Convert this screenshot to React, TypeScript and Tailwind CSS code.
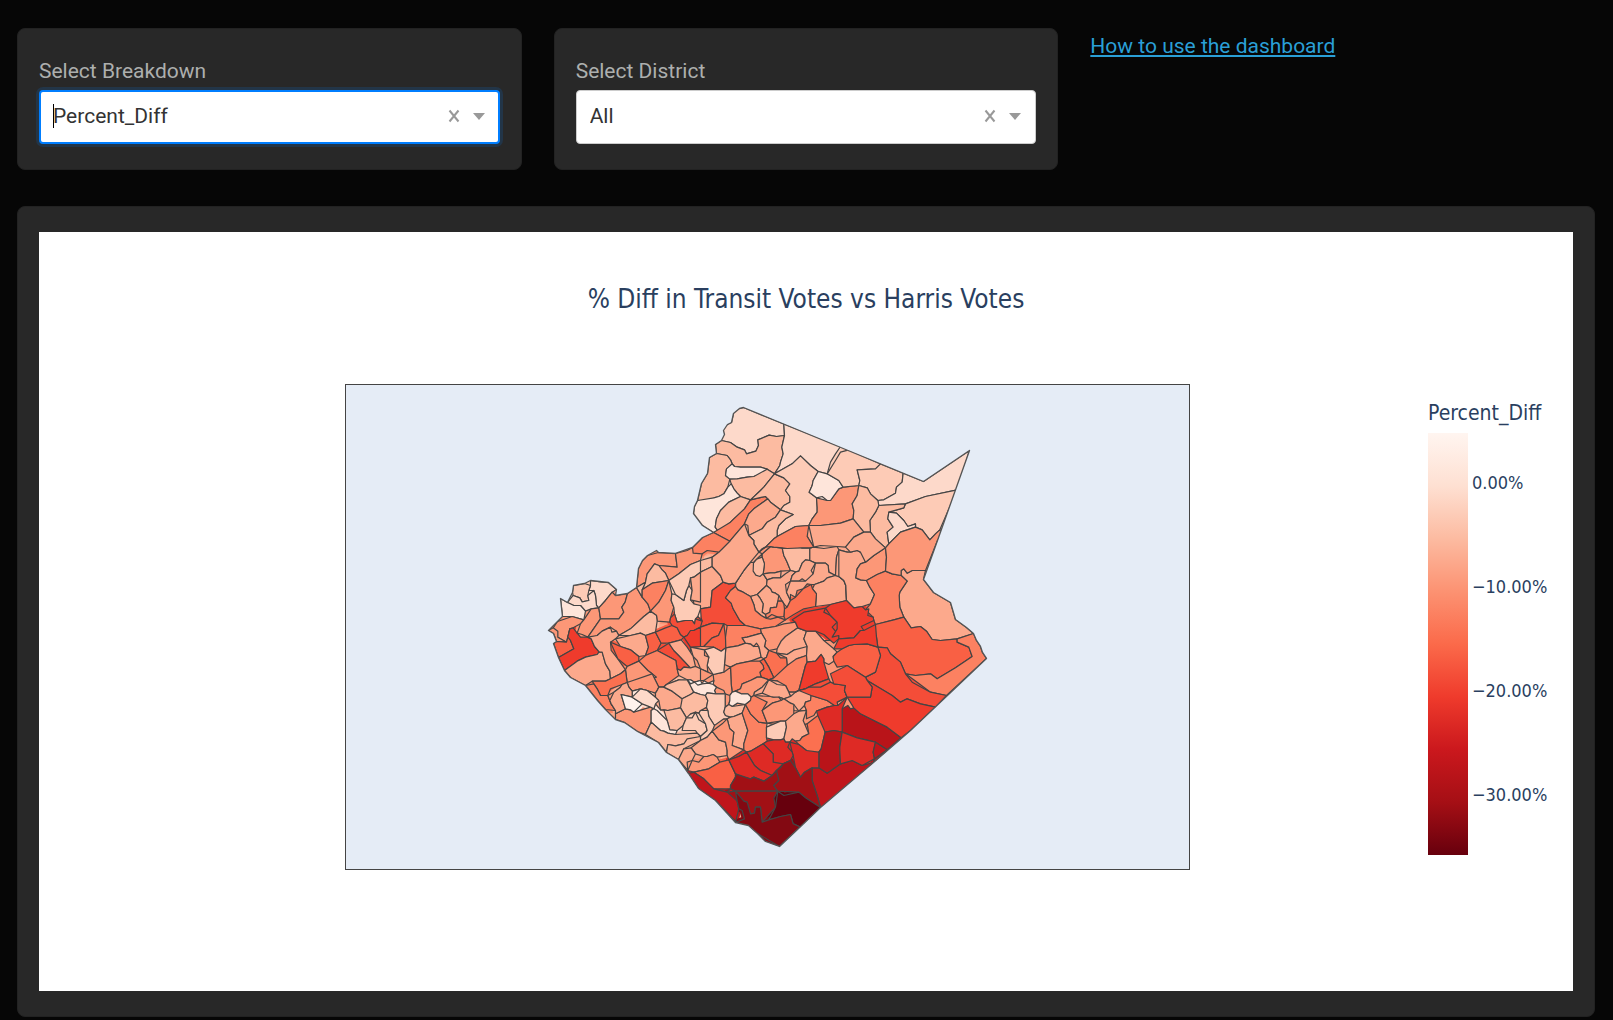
import React from 'react';

type Precinct = [fill: string, points: string];
type Point = [number, number];

interface Region {
  name: string;
  x: number;
  y: number;
  precincts: Precinct[];
}

// Sequential "Reds" scale, light to dark
const REDS: Record<string, string> = {
  a: '#fff2ec',
  b: '#fee5da',
  c: '#fdd9ca',
  d: '#fdcbb6',
  e: '#fcbba1',
  f: '#fca98c',
  g: '#fc9777',
  h: '#fc8161',
  i: '#fb7050',
  j: '#f96044',
  k: '#f44d38',
  l: '#ef3b2c',
  m: '#de2a25',
  n: '#c0151b',
  o: '#b91419',
  p: '#a11015',
  q: '#830912',
  r: '#67000d',
};

const COUNTY =
  '743,407 739,408 733,413 731,422 727,424 723,430 724,434 721,440 715,444 716,453 709,457 707,473 701,483 697,500 694,506 693,513 702,525 713,532 702,537 692,547 675,553 658,552 656,550 647,555 642,560 638,568 636,587 627,593 615,595 616,589 608,582 590,580 584,583 573,585 572,592 567,602 560,598 562,616 557,621 548,630 553,633 556,641 553,643 558,657 564,670 570,677 585,685 597,700 605,709 615,719 624,722 637,731 658,742 666,752 678,759 688,773 698,788 715,800 735,822 748,825 757,833 765,841 779,846 797,829 820,807 840,790 873,762 910,730 986,658 982,652 980,646 976,640 973,633 966,627 955,619 950,602 933,592 923,579 937,540 969,450 923,481';

// Each region's points are in thirds of a map unit, from the region's own corner
const REGIONS: Region[] = [
  {
    name: 'central',
    x: 690,
    y: 540,
    precincts: [
      ['g', '0,320 250,250 420,300 500,300 510,520 300,560 0,520'],
      ['f', '215,40 222,70 218,100 228,135 200,162 180,168 158,155 135,138 150,105 180,65'],
      ['g', '215,35 250,20 275,22 285,55 300,90 272,92 268,88 225,98'],
      ['e', '215,50 198,56 189,66 188,92 196,104 208,108 220,100 217,75'],
      ['e', '275,22 290,24 310,15 335,22 358,22 358,60 345,58 335,68 325,92 316,94 305,85 290,65 280,45'],
      ['f', '358,25 400,24 440,18 445,28 438,50 435,105 415,95 413,75 405,68 375,68 358,55'],
      ['g', '250,-5 345,0 350,-12 370,20 310,15 290,22 250,20 215,38 190,60 225,20'],
      ['f', '222,104 240,97 252,97 254,90 270,90 270,112 248,112 230,118'],
      ['f', '230,118 275,112 285,100 300,92 318,92 300,122 285,132 288,155 300,180 290,200 280,190 265,165 245,155 240,145 228,135'],
      ['f', '335,62 358,58 368,68 362,90 368,100 360,118 345,122 335,115 325,122 300,125 305,105 320,95'],
      ['f', '370,70 400,68 412,76 415,90 432,108 410,112 400,122 372,132 362,132 350,130 338,145 320,150 315,170 300,162 298,185 285,150 300,125 350,120 370,95'],
      ['f', '372,132 400,122 415,110 432,108 445,108 460,120 466,135 468,180 420,192 375,198 378,160 366,145'],
      ['i', '362,132 366,145 378,160 375,198 340,205 310,222 285,238 282,205 298,185 318,175 322,165'],
      ['f', '228,135 238,150 255,158 265,170 262,182 275,185 262,190 258,200 240,202 238,215 225,222 215,215 218,190 208,172 200,165'],
      ['f', '176,172 200,162 208,172 218,190 215,215 228,234 212,225 194,210 190,192'],
      ['h', '275,182 284,205 280,228 262,230 244,222 228,232 222,225 238,218 240,204 258,200 262,188'],
      ['f', '445,28 470,35 510,35 510,190 490,202 468,185 465,130 445,108 432,105 438,50'],
      ['f', '498,72 510,70 510,118 496,112'],
      ['f', '65,50 85,35 130,0 190,0 215,38 160,90 135,128 98,125 65,78'],
      ['e', '0,72 30,60 65,50 70,78 40,90 10,110 0,112'],
      ['f', '0,112 40,88 70,78 90,105 96,125 65,150 60,200 30,205 10,190 5,150'],
      ['k', '98,125 115,130 130,130 120,150 105,172 122,188 128,205 148,240 165,255 100,250 65,248 10,270 5,240 22,228 35,242 32,232 30,205 62,200 62,150'],
      ['h', '135,130 142,148 180,168 192,205 212,228 240,236 285,240 255,258 210,265 165,255 148,240 128,205 122,188 105,172 125,150'],
      ['j', '0,270 65,250 108,252 84,285 65,292 40,318 0,315'],
      ['j', '108,252 105,290 106,322 92,332 70,320 42,318 68,292 86,285'],
      ['h', '110,255 165,258 215,265 213,278 170,290 155,292 165,308 142,316 108,325'],
      ['g', '210,265 255,258 280,250 315,245 322,262 285,288 272,302 260,325 235,330 222,318 226,300 215,278'],
      ['f', '108,325 142,316 180,310 205,318 212,350 180,362 140,370 120,380 102,372'],
      ['f', '155,290 170,290 215,276 226,300 220,320 232,330 228,350 215,352 208,330 210,312 198,308 190,318 165,310'],
      ['f', '322,265 348,272 340,295 350,318 338,330 312,328 290,342 258,338 270,305 285,288'],
      ['f', '265,342 290,342 312,328 352,322 348,345 318,355 312,368 290,375 288,352'],
      ['i', '240,332 262,340 270,352 286,352 290,378 295,395 250,412 235,380 220,355 232,345'],
      ['j', '208,362 222,355 235,380 252,412 235,418 212,410 208,395 220,385'],
      ['h', '350,340 345,375 325,450 295,455 285,435 240,420 255,410 290,378 318,358'],
      ['f', '348,278 375,272 400,300 440,335 428,348 430,362 415,372 400,355 392,342 375,362 350,365 358,320 340,300'],
      ['l', '390,343 400,365 415,415 375,430 322,454 345,365 370,362'],
      ['h', '120,382 180,368 210,358 218,375 206,390 212,410 180,420 155,430 150,445 125,455 122,430'],
      ['g', '120,378 122,430 118,465 104,460 100,450 78,440 70,420 68,402 100,395'],
      ['d', '42,328 70,320 92,330 108,326 100,372 105,395 62,402 50,375 55,350'],
      ['f', '5,320 40,328 42,345 55,352 50,375 52,395 30,385 20,360 8,348'],
      ['g', '0,382 25,378 50,395 65,408 40,420 0,418'],
      ['b', '0,420 12,425 22,434 35,430 42,422 54,428 65,418 68,432 80,440 72,450 76,460 50,457 30,462 20,445 5,446'],
      ['e', '0,462 45,465 52,480 48,500 30,510 0,510'],
      ['d', '52,478 78,462 100,460 104,500 75,510 52,510'],
      ['b', '110,500 118,480 138,465 135,452 152,460 172,460 182,470 165,492 140,488 125,498'],
      ['g', '138,450 155,430 200,410 232,418 215,440 192,455 188,470 155,456'],
      ['f', '190,465 195,452 235,424 262,422 288,435 295,450 290,462 240,468'],
      ['f', '272,480 300,468 295,452 325,455 345,445 362,465 345,485 348,510 310,510 300,488'],
      ['f', '215,510 245,488 280,475 300,490 312,510'],
      ['l', '305,238 340,215 405,203 400,215 440,245 425,260 445,285 430,308 400,282 375,270 345,272 320,262'],
      ['k', '355,440 375,430 418,415 430,430 465,435 462,450 470,470 440,485 362,470'],
    ],
  },
  {
    name: 'west',
    x: 530,
    y: 540,
    precincts: [
      ['c', '180,122 210,124 235,125 258,148 225,180 205,202 198,195 195,165 190,150 175,150 180,135'],
      ['d', '130,135 165,125 175,130 180,150 172,165 175,180 155,184 148,172 128,165'],
      ['c', '120,165 128,165 150,172 155,184 175,180 172,160 185,148 195,165 198,205 165,212 150,195 130,195 110,185'],
      ['b', '90,175 110,185 130,195 148,195 168,212 160,238 125,228 95,228'],
      ['g', '68,262 80,245 130,230 155,235 150,250 128,262 118,265 112,290 108,305 82,290'],
      ['g', '55,270 72,258 82,272 88,290 108,305 78,305'],
      ['j', '68,308 108,305 115,272 120,300 130,325 85,352'],
      ['l', '120,265 128,262 140,278 150,290 182,295 192,318 206,334 200,342 165,350 102,390 88,352 130,325 118,290'],
      ['f', '102,390 140,362 165,350 215,335 225,370 238,392 240,415 185,422 165,435 120,410'],
      ['g', '182,205 208,202 210,235 172,290 155,282 140,278 150,255 162,238'],
      ['g', '245,155 258,160 262,168 285,165 284,185 274,200 280,215 265,235 212,238 205,230 212,205'],
      ['g', '315,148 335,170 360,212 340,228 300,265 265,285 240,260 200,285 175,290 212,235 265,235 280,215 274,200 284,180 287,165'],
      ['f', '175,290 215,272 240,260 244,275 258,272 262,285 240,305 242,330 262,355 285,388 240,415 234,392 222,370 218,330 205,334 190,312'],
      ['g', '318,140 325,85 350,45 385,35 435,38 440,80 385,75 372,70 350,100 345,125'],
      ['g', '430,38 470,30 510,20 510,60 480,80 445,100 415,120 405,98 385,78 440,80'],
      ['e', '345,125 350,100 374,70 395,88 410,116 365,128 335,148'],
      ['e', '315,146 345,128 338,142 330,150 342,165 332,168'],
      ['h', '335,150 365,128 415,120 405,150 385,185 362,208 352,190 342,170'],
      ['g', '415,125 424,160 422,180 430,200 420,232 418,245 380,242 378,225 362,212 385,185'],
      ['d', '420,160 435,162 460,180 468,150 475,135 485,155 480,178 510,195 508,225 495,235 492,250 465,240 440,245 432,220 428,200'],
      ['d', '415,122 445,100 480,80 510,62 510,95 475,110 480,140 470,135 460,178 440,160'],
      ['f', '510,95 475,108 482,150 484,180 510,185'],
      ['e', '262,290 300,265 360,220 378,228 378,245 384,250 375,275 345,285 330,278 300,285'],
      ['f', '255,295 330,278 345,285 354,320 345,345 325,348 300,328 270,318'],
      ['j', '240,303 272,318 300,328 328,350 325,362 290,378 262,352'],
      ['j', '345,285 378,275 392,308 380,330 345,345 354,320'],
      ['j', '378,268 405,262 425,255 440,262 460,290 415,308 390,305'],
      ['k', '415,228 435,226 440,245 465,240 492,250 495,235 510,240 510,260 470,285 450,282 425,255'],
      ['k', '383,335 415,312 430,330 445,345 475,380 460,380 450,390 440,385 436,360'],
      ['f', '415,312 452,298 470,320 485,350 495,378 475,380 445,345'],
      ['l', '462,292 510,262 510,318 482,320'],
      ['h', '330,362 383,335 436,360 440,385 445,405 408,432 385,440 365,400'],
      ['g', '290,392 330,362 352,390 378,410 290,426'],
      ['i', '190,425 225,422 270,400 292,390 290,426 240,445 232,465 210,465 200,445'],
      ['h', '165,435 190,430 200,445 210,465 240,468 242,490 255,510 225,510'],
      ['g', '290,426 368,408 385,440 375,458 350,450 330,445 305,452'],
      ['b', '300,452 322,442 345,450 385,480 370,505 340,480 305,470'],
      ['g', '240,462 275,432 295,440 305,462 272,462 285,505 255,510 242,490'],
      ['a', '272,460 305,465 335,490 300,508 285,505'],
      ['e', '400,440 445,418 480,430 490,455 455,475 430,465 425,452'],
      ['f', '440,390 475,382 510,380 510,420 470,418 445,410'],
      ['a', '470,420 510,418 510,460 492,455'],
      ['f', '385,442 425,452 430,465 460,475 450,502 400,508 375,490'],
    ],
  },
  {
    name: 'southwest',
    x: 580,
    y: 680,
    precincts: [
      ['g', '105,100 130,92 160,95 210,80 216,90 212,125 195,162 170,145 105,118'],
      ['f', '88,60 100,35 118,22 145,12 160,35 150,48 120,45 130,92 105,100'],
      ['a', '120,45 150,48 188,72 155,95 135,92'],
      ['c', '155,45 175,22 200,35 235,65 220,85 185,68'],
      ['f', '230,30 250,20 280,35 305,55 310,70 298,80 262,90 240,88 225,50'],
      ['e', '260,15 290,0 320,0 340,35 335,45 305,52 280,35 245,22'],
      ['b', '322,0 335,8 348,2 362,10 380,0 396,8 412,12 402,24 406,38 375,36 358,42 345,42 338,28'],
      ['e', '305,62 345,42 380,45 384,65 370,85 330,100 318,112 300,85'],
      ['e', '252,95 300,82 312,112 308,135 290,150 268,148 260,120'],
      ['b', '212,90 230,90 262,128 270,150 290,148 285,162 262,158 240,150 220,125'],
      ['d', '320,112 335,112 345,95 355,118 375,130 380,150 360,168 345,150 305,150'],
      ['d', '380,42 435,48 438,80 430,95 450,110 430,115 402,135 385,108'],
      ['d', '355,98 380,90 385,108 402,140 395,152 360,180 358,168 385,150 375,125'],
      ['e', '195,165 218,125 250,152 270,160 350,158 354,172 310,190 262,192 255,210 235,185'],
      ['e', '255,210 260,192 285,196 310,190 320,175 352,170 352,182 310,205 295,238'],
      ['f', '332,202 380,170 400,155 415,178 435,185 440,225 410,230 398,222 380,228 345,220'],
      ['f', '295,238 310,210 330,200 350,224 335,240 320,245 322,270'],
      ['g', '318,265 335,240 355,245 370,228 395,222 418,245 385,265 340,275'],
      ['b', '445,72 452,50 470,35 485,45 510,45 510,60 492,78'],
      ['e', '435,82 495,80 485,98 460,108 435,105'],
      ['f', '440,115 485,105 502,150 490,208 455,195 460,155 448,145'],
      ['g', '400,150 425,130 440,115 448,145 460,155 450,190 495,215 445,238 435,225 440,210 435,185 415,178'],
      ['j', '345,278 385,268 445,240 465,290 450,325 400,325 370,295'],
      ['n', '325,280 345,278 370,295 405,328 465,332 475,385 470,425 480,438 405,360 355,325'],
      ['m', '445,240 475,228 510,212 510,295 480,290 465,280'],
    ],
  },
  {
    name: 'south',
    x: 730,
    y: 680,
    precincts: [
      ['h', '38,100 48,78 60,100 85,125 110,128 108,172 110,182 98,190 48,215 40,190 52,150'],
      ['f', '70,50 95,38 115,5 140,12 170,8 178,28 172,48 130,50 95,45'],
      ['f', '145,50 178,45 195,35 222,25 242,42 240,60 222,70 205,92 190,72'],
      ['h', '48,78 70,52 110,65 95,85 110,128 85,125 60,100'],
      ['g', '95,88 160,58 185,75 180,120 150,122 110,128'],
      ['d', '108,140 145,122 165,122 168,140 160,175 130,178 110,172'],
      ['f', '172,122 190,100 222,92 218,120 235,160 215,170 208,180 185,175 165,185'],
      ['i', '195,182 215,170 235,160 230,130 262,105 275,110 284,155 265,215 250,222 228,210'],
      ['h', '242,48 290,60 312,75 258,92 250,105 228,115 222,75'],
      ['k', '200,35 240,15 270,20 300,5 350,20 345,50 315,75 245,50'],
      ['k', '350,15 410,0 425,20 420,50 350,55'],
      ['o', '335,85 352,75 360,85 370,82 385,100 470,140 512,172 470,208 435,185 335,155'],
      ['m', '260,92 290,80 322,75 350,55 338,85 335,152 310,150 285,155'],
      ['n', '245,262 290,278 330,250 365,240 395,255 430,242 470,205 450,260 270,390 260,345 245,300'],
      ['o', '285,155 335,150 328,200 330,250 290,278 265,262 272,205'],
      ['m', '335,155 380,172 438,190 428,215 432,235 395,254 365,240 330,250 328,210'],
      ['n', '438,190 470,208 432,242 428,215'],
      ['m', '178,185 205,192 230,215 264,222 264,262 240,262 222,275 210,290 195,262 188,225'],
      ['m', '98,190 150,178 180,182 172,200 185,215 180,240 158,250 132,255 128,220'],
      ['m', '48,218 98,190 128,215 128,245 158,250 138,270 125,285 90,270'],
      ['m', '-5,242 48,215 72,255 92,270 125,282 100,302 15,275'],
      ['p', '18,275 70,290 100,302 125,282 140,265 182,245 150,262 145,300 130,315 142,332 15,332 0,315 20,295'],
      ['p', '182,242 188,265 210,290 222,270 250,265 242,295 262,345 268,380 225,352 205,335 140,335 132,310 148,298 145,272'],
      ['p', '-10,335 140,335 130,352 135,380 95,425 90,380 75,380 72,398 60,400 50,365 20,362'],
      ['r', '140,338 160,345 205,335 225,355 270,380 210,440 188,430 180,402 150,408 115,418 135,380'],
      ['q', '15,335 40,362 52,365 60,400 72,398 78,375 90,380 95,425 180,402 188,430 210,440 148,498 80,460 20,430 42,415 35,390 20,362'],
    ],
  },
  {
    name: 'east',
    x: 840,
    y: 540,
    precincts: [
      ['f', '0,30 50,30 75,45 75,65 50,85 45,118 78,120 88,140 102,162 90,190 65,198 40,205 15,185 15,140 0,108'],
      ['g', '75,62 100,45 135,22 135,92 110,102 85,122 45,118 50,80'],
      ['f', '182,90 190,85 200,98 215,90 255,90 248,118 280,155 330,185 345,235 400,282 350,295 300,300 275,297 258,272 240,258 212,262 190,230 178,200 178,155 200,122 182,105'],
      ['h', '80,122 135,92 155,100 182,98 198,125 185,150 176,165 182,210 192,235 160,238 105,252 98,230 75,208 102,162'],
      ['j', '98,254 160,238 192,235 212,262 240,258 262,275 280,300 350,293 350,305 385,320 395,348 345,382 290,415 270,400 225,405 195,400 180,365 150,340 140,322 112,320 100,280'],
      ['h', '350,293 400,282 438,355 318,465 270,455 230,425 200,402 270,402 290,415 345,382 395,350 385,318 350,308'],
      ['k', '112,320 140,322 150,340 180,365 200,402 215,425 270,455 318,465 285,500 240,490 200,475 180,485 155,465 130,450 75,410 105,395 120,345'],
      ['l', '75,410 130,450 180,485 200,475 240,490 288,498 180,595 40,510 22,475 95,468 95,435'],
      ['j', '-25,365 -15,340 25,315 80,310 112,320 120,345 110,395 75,410 20,375 -10,380'],
      ['l', '-45,208 20,186 40,208 85,205 82,225 100,240 62,258 70,270 40,292 -25,290 -10,265 -5,240 -30,225'],
      ['l', '-20,325 -5,295 45,292 60,270 98,255 108,290 112,325 85,312 40,312 5,325'],
      ['k', '-30,400 20,375 75,410 95,435 95,468 20,475 15,430 -5,432 -20,425'],
    ],
  },
  {
    name: 'north',
    x: 670,
    y: 390,
    precincts: [
      ['c', '220,50 340,100 342,135 318,138 296,134 262,148 264,165 256,182 228,190 222,178 200,170 180,156 152,158 130,162 140,120 182,95 185,60'],
      ['e', '135,162 152,158 180,156 200,170 222,178 228,190 256,182 264,165 262,148 296,134 342,135 334,170 338,190 328,225 312,250 290,236 270,230 192,228 180,208 170,195 137,188'],
      ['e', '137,188 170,195 185,220 168,235 165,255 178,266 172,290 160,310 145,318 130,322 115,332 78,333 85,280 105,250 110,200'],
      ['b', '185,225 210,230 270,230 290,238 290,245 250,258 230,260 200,265 175,265 165,250 170,232'],
      ['e', '178,266 230,260 295,240 308,255 270,300 240,328 210,318 190,295'],
      ['b', '82,333 130,322 160,310 182,280 200,308 210,318 175,335 150,360 138,385 134,410 145,425 85,405 65,370'],
      ['e', '210,318 240,328 222,355 190,385 150,420 136,405 138,385 150,358 178,335'],
      ['h', '240,328 285,318 292,325 250,355 222,400 178,452 135,428 180,395'],
      ['c', '340,100 510,168 495,190 480,215 470,250 443,243 420,225 390,196 365,220 318,245 330,215 338,190 332,175 342,135'],
      ['e', '308,252 318,248 340,262 358,280 345,300 358,318 358,335 340,345 330,358 300,335 275,320 245,325 280,290'],
      ['d', '318,245 365,220 390,196 443,245 425,285 416,305 438,322 440,350 425,385 415,405 375,408 320,438 325,405 345,385 368,372 335,358 340,345 358,335 358,318 345,300 358,280'],
      ['f', '292,325 330,358 315,380 290,395 275,415 245,430 235,435 232,405 222,400 235,370 255,350'],
      ['e', '330,358 368,372 345,388 320,420 315,440 265,485 250,455 240,435 275,415 290,395 315,380'],
      ['h', '265,488 320,438 375,408 415,405 415,440 425,468 390,475 340,466 300,468 275,475'],
      ['f', '178,452 222,400 235,435 250,460 258,490 220,540 190,580 158,575 125,525 125,500 145,485'],
      ['h', '60,475 95,438 130,425 178,452 155,475 140,482 110,480 95,490 68,488'],
    ],
  },
  {
    name: 'northeast',
    x: 820,
    y: 390,
    precincts: [
      ['g', '-35,405 -10,365 -10,322 20,330 30,330 55,295 115,285 110,315 95,340 98,385 60,398 0,405'],
      ['b', '-5,245 20,250 55,270 68,290 48,305 30,330 5,318 -12,322 -32,308 -22,270'],
      ['d', '85,178 180,220 165,235 110,238 118,270 115,285 70,290 55,270 20,250 45,210 60,185'],
      ['d', '180,220 248,248 245,275 228,290 225,308 190,328 172,330 150,310 140,292 115,282 118,262 110,238 168,235'],
      ['c', '248,248 310,272 448,175 410,298 315,318 255,340 175,345 172,332 190,328 225,308 228,290 245,275'],
      ['d', '408,298 358,418 345,430 328,448 305,418 285,410 285,400 262,408 250,390 228,368 205,365 250,352 260,340 315,318'],
      ['e', '175,345 255,340 250,352 205,365 202,385 218,410 200,425 205,460 190,468 165,445 150,425 148,390 165,365'],
      ['c', '205,365 228,368 250,390 258,408 285,400 285,410 240,425 205,460 200,430 218,412 204,388'],
      ['g', '205,460 240,425 285,410 305,418 328,448 358,415 365,430 318,542 275,538 260,548 248,535 238,552 195,540 198,500 192,470'],
      ['e', '115,285 140,292 150,310 175,335 165,365 148,390 148,425 130,425 98,385 100,360 95,340 110,315'],
      ['f', '-35,405 0,405 60,398 98,385 130,425 100,440 75,470 0,465 -25,470'],
      ['f', '75,470 100,440 150,425 165,445 190,468 165,490 135,510 120,490 90,485'],
    ],
  },
];

const parse = (points: string, x = 0, y = 0, scale = 1): Point[] =>
  points.split(' ').map((pair) => {
    const [px, py] = pair.split(',').map(Number);
    return [px * scale + x * 3, py * scale + y * 3];
  });

// Corners closer than this are the same corner
const WELD = 9;
// Corners closer than this to a border lie on it
const SNAP = 7;

const corners: Point[] = [];

const weld = (p: Point): Point => {
  let best: Point | null = null;
  let bestDist = WELD;
  for (const c of corners) {
    const d = Math.hypot(c[0] - p[0], c[1] - p[1]);
    if (d < bestDist) {
      best = c;
      bestDist = d;
    }
  }
  if (best) return best;
  corners.push(p);
  return p;
};

// Routes each border through the corners its neighbours put on it
const follow = (ring: Point[]): Point[] =>
  ring.flatMap((a, i) => {
    const b = ring[(i + 1) % ring.length];
    const dx = b[0] - a[0];
    const dy = b[1] - a[1];
    const len = Math.hypot(dx, dy);
    if (len === 0) return [];
    const between = corners
      .filter((c) => !ring.includes(c))
      .map((c) => {
        const t = ((c[0] - a[0]) * dx + (c[1] - a[1]) * dy) / len;
        const off = Math.abs((c[0] - a[0]) * dy - (c[1] - a[1]) * dx) / len;
        return { c, t, off };
      })
      .filter(({ t, off }) => t > 2 && t < len - 2 && off < SNAP)
      .sort((m, n) => m.t - n.t)
      .map(({ c }) => c);
    return [a, ...between];
  });

const county = parse(COUNTY, 0, 0, 3);
county.forEach((p) => corners.push(p));

const precincts = REGIONS.flatMap((region) =>
  region.precincts.map(([fill, points]) => ({
    fill: REDS[fill],
    ring: parse(points, region.x, region.y).map(weld),
  })),
).map(({ fill, ring }) => ({ fill, points: follow(ring).join(' ') }));

const TICKS = ['0.00%', '−10.00%', '−20.00%', '−30.00%'];

const PrecinctMap: React.FC = () => (
  <svg
    viewBox="0 0 845 486"
    role="img"
    aria-label="Precinct map"
    className="block w-full max-w-[845px] bg-[#e5ecf6] outline-1 -outline-offset-1 outline-[#444]"
  >
    <clipPath id="county">
      <polygon points={county.join(' ')} />
    </clipPath>
    <g transform="translate(-344.5 -383.5) scale(0.33333)" strokeLinejoin="round">
      <g clipPath="url(#county)">
        <polygon points={county.join(' ')} fill={REDS.f} />
        {/* Color bleeds under the borders so no gaps show */}
        {precincts.map(({ fill, points }, i) => (
          <polygon key={i} points={points} fill={fill} stroke={fill} strokeWidth="16" />
        ))}
        {precincts.map(({ fill, points }, i) => (
          <polygon key={i} points={points} fill={fill} stroke="#444" strokeWidth="3.6" />
        ))}
      </g>
      <polygon points={county.join(' ')} fill="none" stroke="#555" strokeWidth="4" />
    </g>
  </svg>
);

interface DropdownProps {
  id: string;
  label: string;
  options: string[];
  active?: boolean;
}

const Dropdown: React.FC<DropdownProps> = ({ id, label, options, active }) => (
  <div className="rounded-lg border border-[#222] bg-[#282828] px-[21px] pt-6 pb-[25px]">
    <label htmlFor={id} className="block text-[21px] leading-9 text-[#adafae]">
      {label}
    </label>
    <div className="relative mt-px">
      <select
        id={id}
        className={
          active
            ? 'block h-[54px] w-full appearance-none rounded border-2 border-[#007eff] bg-white pr-20 pl-3 text-[21px] text-[#333] shadow-[0_0_0_3px_rgba(0,126,255,0.15)] outline-none'
            : 'block h-[54px] w-full appearance-none rounded border border-[#ccc] bg-white pr-20 pl-[13px] text-[21px] text-[#333] outline-none'
        }
      >
        {options.map((option) => (
          <option key={option}>{option}</option>
        ))}
      </select>
      {/* Text cursor */}
      {active && <span className="absolute top-3.5 left-3.5 h-6 w-px bg-black"></span>}
      <div className="pointer-events-none absolute inset-y-0 right-3.5 flex items-center gap-3 pb-0.5">
        <button type="button" aria-label="Clear value" className="pointer-events-auto text-[#999]">
          <svg width="12" height="14" viewBox="0 0 12 14" fill="none" stroke="currentColor" strokeWidth="2">
            <path d="M1.5 1.5l9 11M10.5 1.5l-9 11"></path>
          </svg>
        </button>
        <svg width="14" height="10" viewBox="0 0 14 10" fill="#999">
          <path d="M1 2h12l-6 7z"></path>
        </svg>
      </div>
    </div>
  </div>
);

const ColorBar: React.FC = () => (
  <div className="w-[131px] shrink-0 pt-[17px] text-[#2a3f5f]">
    <div className="text-[21px] leading-6">Percent_Diff</div>
    <div className="mt-2 flex gap-1">
      <div className="h-[422px] w-10 bg-[linear-gradient(#fff5f0,#fee0d2,#fcbba1,#fc9272,#fb6a4a,#ef3b2c,#cb181d,#a50f15,#67000d)]"></div>
      <div className="flex flex-col gap-20 pt-[38px] text-[18px] leading-6">
        {TICKS.map((tick) => (
          <span key={tick}>{tick}</span>
        ))}
      </div>
    </div>
  </div>
);

const App: React.FC = () => {
  return (
    <div className="min-h-screen bg-[#060606] pt-7 pr-[18px] pb-0.5 pl-[17px] font-['Roboto',sans-serif]">
      <div className="grid grid-cols-3 gap-8">
        <Dropdown id="breakdown" label="Select Breakdown" options={['Percent_Diff']} active />
        <Dropdown id="district" label="Select District" options={['All']} />
        <div>
          <a href="#help" className="text-[21px] leading-9 text-[#2a9fd6] underline">
            How to use the dashboard
          </a>
        </div>
      </div>

      <div className="mt-9 rounded-lg border border-[#222] bg-[#282828] px-[21px] pt-[25px] pb-[25px]">
        <div className="bg-white pt-[49px] pb-[121px] font-['DejaVu_Sans_Condensed','DejaVu_Sans',sans-serif]">
          <h1 className="text-center text-[26px] leading-9 text-[#2a3f5f]">
            % Diff in Transit Votes vs Harris Votes
          </h1>
          <div className="mt-[67px] flex pr-3.5 pl-20">
            <div className="flex flex-1 items-start justify-center pr-3">
              <PrecinctMap />
            </div>
            <ColorBar />
          </div>
        </div>
      </div>
    </div>
  );
};

export default App;
